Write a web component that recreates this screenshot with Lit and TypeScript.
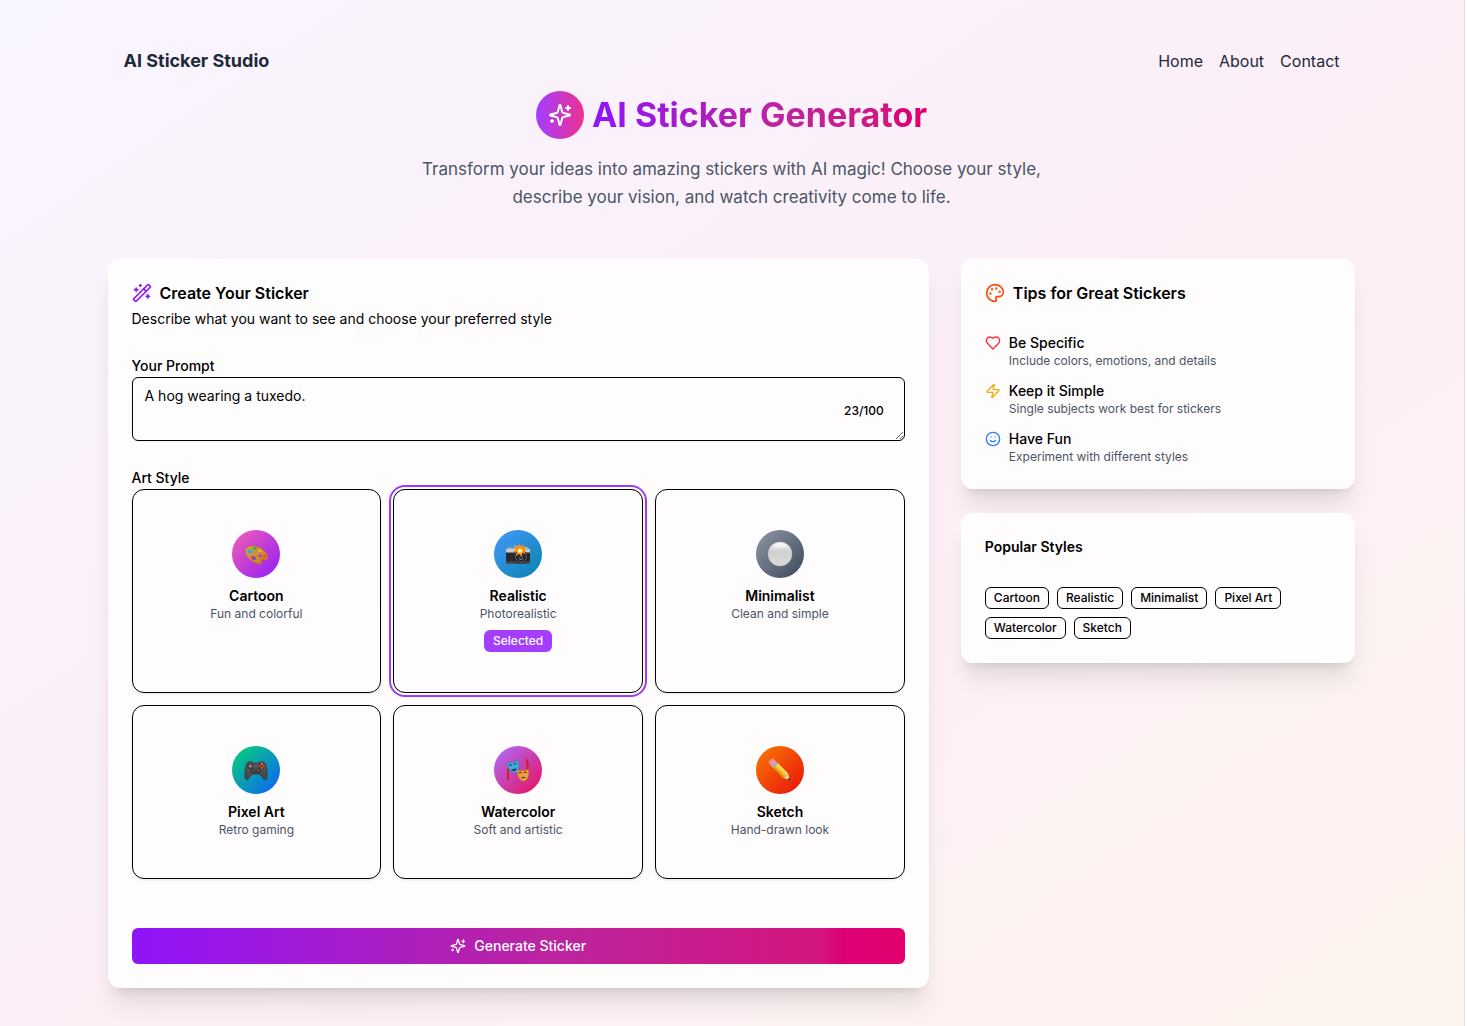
import { LitElement, html, css, svg } from "lit";
import { customElement, property, state } from "lit/decorators.js";

const ICONS: Record<string, unknown> = {
  sparkles: svg`<path d="M9.937 15.5A2 2 0 0 0 8.5 14.063l-6.135-1.582a.5.5 0 0 1 0-.962L8.5 9.936A2 2 0 0 0 9.937 8.5l1.582-6.135a.5.5 0 0 1 .963 0L14.063 8.5A2 2 0 0 0 15.5 9.937l6.135 1.581a.5.5 0 0 1 0 .964L15.5 14.063a2 2 0 0 0-1.437 1.437l-1.582 6.135a.5.5 0 0 1-.963 0z"/><path d="M20 3v4M22 5h-4M4 17v2M5 18H3"/>`,
  wand: svg`<path d="m21.64 3.64-1.28-1.28a1.21 1.21 0 0 0-1.72 0L2.36 18.64a1.21 1.21 0 0 0 0 1.72l1.28 1.28a1.2 1.2 0 0 0 1.72 0L21.64 5.36a1.2 1.2 0 0 0 0-1.72"/><path d="m14 7 3 3M5 6v4M19 14v4M10 2v2M7 8H3M21 16h-4M11 3H9"/>`,
  palette: svg`<circle cx="13.5" cy="6.5" r=".5" fill="currentColor"/><circle cx="17.5" cy="10.5" r=".5" fill="currentColor"/><circle cx="8.5" cy="7.5" r=".5" fill="currentColor"/><circle cx="6.5" cy="12.5" r=".5" fill="currentColor"/><path d="M12 2C6.5 2 2 6.5 2 12s4.5 10 10 10c.926 0 1.648-.746 1.648-1.688 0-.437-.18-.835-.437-1.125-.29-.289-.438-.652-.438-1.125a1.64 1.64 0 0 1 1.668-1.668h1.996c3.051 0 5.555-2.503 5.555-5.554C21.965 6.012 17.461 2 12 2z"/>`,
  heart: svg`<path d="M19 14c1.49-1.46 3-3.21 3-5.5A5.5 5.5 0 0 0 16.5 3c-1.76 0-3 .5-4.5 2-1.5-1.5-2.74-2-4.5-2A5.5 5.5 0 0 0 2 8.5c0 2.3 1.5 4.05 3 5.5l7 7Z"/>`,
  zap: svg`<path d="M4 14a1 1 0 0 1-.78-1.63l9.9-10.2a.5.5 0 0 1 .86.46l-1.92 6.02A1 1 0 0 0 13 10h7a1 1 0 0 1 .78 1.63l-9.9 10.2a.5.5 0 0 1-.86-.46l1.92-6.02A1 1 0 0 0 11 14z"/>`,
  smile: svg`<circle cx="12" cy="12" r="10"/><path d="M8 14s1.5 2 4 2 4-2 4-2M9 9h.01M15 9h.01"/>`,
};

/* Full-colour pictures inside the style discs, on a 26 x 26 grid. */
const PICTURES: Record<string, unknown> = {
  cartoon: svg`
    <defs><linearGradient id="wood" x1="0" y1="0" x2="1" y2="1"><stop offset="0" stop-color="#dba04c"/><stop offset="1" stop-color="#c47c22"/></linearGradient></defs>
    <path d="M2.2 9.6C2.6 5.8 7 4.2 12 5.2c6.300 1.200 12.300 5.600 12.900 11 .3 3.200-2.500 2.900-4.900 2.500-1.700-.3-2.300.9-1.800 2.200.6 1.600-.4 2.700-2.300 2.200C9.700 21.600 1.500 15.700 2.200 9.600z" fill="url(#wood)" stroke="#a8691f" stroke-width=".5"/>
    <ellipse cx="11.500" cy="7.600" rx="2.300" ry="1.500" fill="#3fb53a"/>
    <ellipse cx="6.900" cy="10.300" rx="2.500" ry="1.900" fill="#31aaf0"/>
    <ellipse cx="17" cy="9.700" rx="1.800" ry="1.100" fill="#f0c02e" transform="rotate(25 17 9.700)"/>
    <ellipse cx="10.600" cy="17" rx="2.500" ry="1.600" fill="#8a42b4" transform="rotate(30 10.600 17)"/>
    <ellipse cx="21.800" cy="15.500" rx="2.100" ry="1.400" fill="#ea4a45" transform="rotate(30 21.800 15.500)"/>
    <ellipse cx="17" cy="14.700" rx="1.700" ry="1.200" fill="#a63fc0" transform="rotate(25 17 14.700)"/>`,
  camera: svg`
    <path d="M2.500 6.500h4.200v2H2.500zM19 6h3.500v2H19z" fill="#b9bcc0"/>
    <path d="M9 4.500h8.500l1.500 3.500H8z" fill="#a4a7ab"/>
    <rect x="1" y="7.200" width="24" height="15.300" rx="1.600" fill="#29292b"/>
    <path d="M1 8.800Q1 7.200 2.600 7.200h20.800Q25 7.200 25 8.800V11.500H1z" fill="#c9ccd0"/>
    <path d="M1 20.500h24v.6Q25 22.500 23.400 22.500H2.600Q1 22.500 1 21.100z" fill="#4a4a4d"/>
    <circle cx="16" cy="15.800" r="6.600" fill="#1a1a1c"/><circle cx="16" cy="15.800" r="5.400" fill="none" stroke="#737579" stroke-width=".9"/>
    <circle cx="16" cy="15.800" r="3.400" fill="#30343b"/><path d="M13.800 17.700a3 3 0 0 0 4.300 0" stroke="#7b8490" stroke-width=".9" fill="none"/>
    <path d="M14.500 2.300 15.700 6l3.900-2.700-1.400 4.300 4.200.6-3.700 1.700 2.600 3.400-4.100-1.300-.6 4.200-2.400-3.500-3.400 2.500.9-4.100-4.400-.4 3.900-2-2.700-3.100 4 .7z" fill="#f28a10"/>
    <path d="m14.700 5.400.9 2.500 2.100-.7-.7 2 2 1-2.300.6.4 2.300-2-1.300-1.800 1.500.2-2.200-2.200-.6 2-1.100-.9-2 1.900.5z" fill="#ffd23c"/><circle cx="14.800" cy="9.700" r="1.500" fill="#fff7cf"/>`,
  circle: svg`
    <defs><linearGradient id="pearl" x1="0" y1="0" x2="0" y2="1"><stop offset="0" stop-color="#fafafa"/><stop offset=".28" stop-color="#dcdcdc"/><stop offset=".4" stop-color="#d0d0d1"/><stop offset="1" stop-color="#dadada"/></linearGradient></defs>
    <circle cx="13" cy="13" r="12" fill="url(#pearl)" stroke="#bfc1c4" stroke-width=".5"/><ellipse cx="13" cy="4.500" rx="6.500" ry="2.600" fill="#f9f9f9" opacity=".6"/>`,
  gamepad: svg`
    <defs><linearGradient id="pad" x1="0" y1="0" x2="0" y2="1"><stop offset="0" stop-color="#5c5b59"/><stop offset="1" stop-color="#454443"/></linearGradient></defs>
    <g transform="translate(1.300 1.500) scale(.9)">
      <path d="M5 3.700h4l1.200 1.400h5.600L17 3.700h4c2.200.5 3 2.600 3.500 5.400.7 4 1.300 9 .5 12.600-.5 2-2.500 2.300-3.800.7-1.500-1.900-2.500-4.400-4.200-5H9c-1.700.6-2.700 3.100-4.200 5C3.500 24 1.500 23.700 1 21.700.2 18.100.8 13.100 1.500 9.100 2 6.300 2.800 4.200 5 3.700z" fill="url(#pad)" stroke="#2a2928" stroke-width=".6"/>
      <circle cx="6.800" cy="8.400" r="3.500" fill="#3b3a3a"/><path d="M6.800 6v4.800M4.400 8.400h4.800" stroke="#8a8a88" stroke-width="1.500"/>
      <circle cx="19.400" cy="8.200" r="3.600" fill="#3f3431"/>
      <circle cx="19.400" cy="6" r="1.300" fill="#f2713f"/><circle cx="17.300" cy="8.300" r="1.200" fill="#c75130"/><circle cx="21.500" cy="8.300" r="1.300" fill="#f04a2a"/><circle cx="19.400" cy="10.500" r="1.200" fill="#e0522c"/>
      <circle cx="10" cy="13.700" r="2.600" fill="#2d2c2c"/><circle cx="10" cy="13.500" r="1.600" fill="#5b5a59"/><circle cx="16" cy="13.700" r="2.600" fill="#2d2c2c"/><circle cx="16" cy="13.500" r="1.600" fill="#5b5a59"/>
    </g>`,
  masks: svg`
    <path d="M3.400 11C2.300 14 3.600 17 2.900 22M21.500 3c2.300 3.500.3 6.500 1.200 10" stroke="#c41f2b" stroke-width="1.900" fill="none" stroke-linecap="round"/>
    <path d="M1.600 5.300c3.500.6 7.600-.1 11.300-2.200 1.700 4.800 2.200 10.600-2.400 12.700C5.600 16.900 2.300 10.500 1.600 5.300z" fill="#46a7dc" stroke="#2574a8" stroke-width=".5"/>
    <path d="M3.800 8.400q1.600-1 2.800.1M8.700 7.400q1.500-1.500 2.800-.6" stroke="#173f63" stroke-width="1.100" fill="none"/><path d="M5.500 12.200q3.600.9 5.800-1.800-.1 3.600-2.600 3.700-2 .1-3.200-1.900z" fill="#17364f"/>
    <path d="M12.200 13c3.500 1 7.500.8 11.200-.7 1.500 5.500-.1 10.400-4.500 11.900-4.500.2-7-5.700-6.700-11.200z" fill="#e9a13c" stroke="#a9621f" stroke-width=".5"/>
    <path d="M14 16.200q1.400-1.500 2.600-.1M19 15.800q1.400-1.400 2.700-.2" stroke="#5b2d10" stroke-width="1.100" fill="none"/><path d="M15.900 21.600q2.200-3.500 4.800-.5-2.200-.4-4.800.5z" fill="#5b2d10"/>`,
  pencil: svg`
    <g transform="rotate(45 13 13)">
      <rect x="-.8" y="9.700" width="4.800" height="6.600" rx="1.700" fill="#ef8f9a"/>
      <rect x="3.600" y="9.700" width="3.500" height="6.600" fill="#b8bec5"/><path d="M4.800 9.700v6.600M6.200 9.700v6.600" stroke="#7d858d" stroke-width=".5"/>
      <rect x="7.100" y="9.700" width="14" height="6.600" fill="#f8c22c"/><path d="M7.100 9.700h14v2h-14z" fill="#fbe16c"/><path d="M7.100 14.300h14v2h-14z" fill="#d99414"/>
      <path d="m21.100 9.700 6.300 3.300-6.300 3.300z" fill="#f0cb94"/><path d="m25 11.700 2.700 1.300-2.700 1.300z" fill="#2d2a2a"/>
    </g>`,
};

const icon = (name: string, cls: string) => html`
  <svg class="icon ${cls}" viewBox="0 0 24 24" fill="none" stroke="currentColor" stroke-width="2" stroke-linecap="round" stroke-linejoin="round" aria-hidden="true">${ICONS[name]}</svg>
`;

const shared = css`
  *, *::before, *::after { box-sizing: border-box; }
  h1, h2, h3, p, ul { margin: 0; padding: 0; }
  ul { list-style: none; }
  button, textarea { font: inherit; color: inherit; margin: 0; }
  .icon { display: block; flex: none; width: 16px; height: 16px; }
  .icon.md { width: 20px; height: 20px; }
  .icon.lg { width: 24px; height: 24px; }
`;

interface ArtStyle { id: string; name: string; note: string; picture: string; }

const STYLES: ArtStyle[] = [
  { id: "cartoon", name: "Cartoon", note: "Fun and colorful", picture: "cartoon" },
  { id: "realistic", name: "Realistic", note: "Photorealistic", picture: "camera" },
  { id: "minimalist", name: "Minimalist", note: "Clean and simple", picture: "circle" },
  { id: "pixel", name: "Pixel Art", note: "Retro gaming", picture: "gamepad" },
  { id: "watercolor", name: "Watercolor", note: "Soft and artistic", picture: "masks" },
  { id: "sketch", name: "Sketch", note: "Hand-drawn look", picture: "pencil" },
];

const TIPS = [
  { icon: "heart", name: "Be Specific", note: "Include colors, emotions, and details" },
  { icon: "zap", name: "Keep it Simple", note: "Single subjects work best for stickers" },
  { icon: "smile", name: "Have Fun", note: "Experiment with different styles" },
];

@customElement("style-option")
class StyleOption extends LitElement {
  @property({ attribute: false }) option!: ArtStyle;
  @property({ type: Boolean }) selected = false;

  static styles = [shared, css`
    :host { display: grid; }
    .option {
      display: flex; flex-direction: column; align-items: center;
      padding: 40px 16px; border: 1px solid #000; border-radius: 12px;
      background: none; text-align: center; cursor: pointer;
      box-shadow: 0 1px 3px rgb(0 0 0 / 0.1);
    }
    .option.selected { box-shadow: 0 0 0 2px #fff, 0 0 0 4px #9d3cf7; }
    .disc { display: grid; place-items: center; width: 48px; height: 48px; border-radius: 50%; margin-bottom: 8px; }
    .picture { display: block; width: 26px; height: 26px; }
    .cartoon { background: linear-gradient(135deg, #f560b2, #8f1cfb); }
    .realistic { background: linear-gradient(135deg, #4598fb, #0784ae); }
    .minimalist { background: linear-gradient(135deg, #8e97a6, #3c4859); }
    .pixel { background: linear-gradient(135deg, #05d672, #0d5ffc); }
    .watercolor { background: linear-gradient(135deg, #a970ff, #ec0d5c); }
    .sketch { background: linear-gradient(135deg, #fb7a04, #e7100b); }
    .name { font-size: 14px; line-height: 20px; font-weight: 600; }
    .note { font-size: 12px; line-height: 16px; color: #4a5565; }
    .badge { margin-top: 8px; padding: 3px 9px; border-radius: 6px; background: #a33eff; color: #fff; font-size: 12px; line-height: 16px; font-weight: 500; }
  `];

  render() {
    const o = this.option;
    return html`
      <button type="button" class="option ${this.selected ? "selected" : ""}" aria-pressed=${this.selected}>
        <span class="disc ${o.id}"><svg class="picture" viewBox="0 0 26 26" aria-hidden="true">${PICTURES[o.picture]}</svg></span>
        <span class="name">${o.name}</span>
        <span class="note">${o.note}</span>
        ${this.selected ? html`<span class="badge">Selected</span>` : null}
      </button>
    `;
  }
}

@customElement("app-root")
class AppRoot extends LitElement {
  @state() private selected = "realistic";

  static styles = [shared, css`
    :host {
      --brand-gradient: linear-gradient(to right, #8f14fb, #bd249e 55%, #d3167f 89%, #dc0078 92%, #e2006c);
      display: block; padding-right: 2px; background: #fff; color: #000;
      font-family: Inter, "Liberation Sans", sans-serif; font-size: 16px; line-height: 24px;
    }
    .page {
      min-height: 100vh; padding-right: 1px; border-right: 1px solid #dcdfe4;
      background: linear-gradient(to bottom right, #f9f5ff, #fceff7 50%, #fef4ee);
    }
    .container { max-width: 1280px; margin: 0 auto; padding: 32px 16px; }
    .topbar { display: flex; justify-content: space-between; align-items: center; margin-bottom: 2px; padding: 16px; color: #1e2939; }
    .brand { font-size: 18px; line-height: 25px; font-weight: 700; }
    .nav { display: flex; gap: 16px; }
    .nav a { color: inherit; text-decoration: none; }
    .hero { display: flex; flex-direction: column; align-items: center; gap: 16px; margin-bottom: 48px; text-align: center; }
    .hero-title { display: flex; align-items: center; gap: 8px; }
    .hero-disc { display: grid; place-items: center; width: 48px; height: 48px; border-radius: 50%; color: #fff; background: linear-gradient(to right, #a13eff, #ee3192); }
    h1 { font-size: 34px; line-height: 40px; font-weight: 700; color: transparent; background: var(--brand-gradient); -webkit-background-clip: text; background-clip: text; }
    .lead { max-width: 640px; font-size: 17px; line-height: 28px; color: #4a5565; }
    .columns { display: grid; grid-template-columns: repeat(3, minmax(0, 1fr)); gap: 32px; align-items: start; }
    .card { background: rgb(255 255 255 / 0.8); border-radius: 12px; padding: 24px; box-shadow: 0 20px 25px -5px rgb(0 0 0 / 0.1), 0 8px 10px -6px rgb(0 0 0 / 0.1); }
    .create { grid-column: span 2; display: flex; flex-direction: column; gap: 24px; }
    .side { display: flex; flex-direction: column; gap: 24px; }
    .side .card { display: flex; flex-direction: column; gap: 30px; }
    .card-title { display: flex; align-items: center; gap: 8px; font-size: 16px; line-height: 20px; font-weight: 600; }
    .card-title.small { font-size: 14px; }
    .wand { color: #9015fa; }
    .palette { color: #f54a0c; }
    .card-desc { margin-top: 6px; font-size: 14px; line-height: 20px; }
    .label { font-size: 14px; line-height: 20px; font-weight: 500; }
    .prompt { position: relative; }
    textarea { display: block; width: 100%; height: 64px; padding: 8px 12px; border: 1px solid #000; border-radius: 6px; background: none; font-size: 14px; line-height: 20px; resize: vertical; box-shadow: 0 1px 2px rgb(0 0 0 / 0.05); }
    .counter { position: absolute; right: 21px; top: 26px; font-size: 12px; line-height: 16px; font-weight: 500; }
    .options { display: grid; grid-template-columns: repeat(3, minmax(0, 1fr)); gap: 12px; }
    .generate {
      display: flex; align-items: center; justify-content: center; gap: 8px; margin-top: 25px; height: 36px;
      border: 0; border-radius: 6px; color: #fff; font-size: 14px; line-height: 20px; font-weight: 500; cursor: pointer;
      background: var(--brand-gradient);
    }
    .tips { display: flex; flex-direction: column; gap: 12px; }
    .tip { display: flex; gap: 8px; }
    .tip .icon { margin-top: 2px; }
    .heart { color: #fb2c36; }
    .zap { color: #edad0a; }
    .smile { color: #2b7fff; }
    .tip-name { font-size: 14px; line-height: 20px; font-weight: 500; }
    .tip-note { font-size: 12px; line-height: 16px; color: #4a5565; }
    .tags { display: flex; flex-wrap: wrap; gap: 8px; }
    .tag { padding: 2px 8px; border: 1px solid #000; border-radius: 6px; font-size: 12px; line-height: 16px; font-weight: 500; }
  `];

  render() {
    return html`
      <div class="page">
        <div class="container">
          <header class="topbar">
            <div class="brand">AI Sticker Studio</div>
            <nav class="nav"><a href="#home">Home</a><a href="#about">About</a><a href="#contact">Contact</a></nav>
          </header>
          <section class="hero">
            <div class="hero-title">
              <div class="hero-disc">${icon("sparkles", "lg")}</div>
              <h1>AI Sticker Generator</h1>
            </div>
            <p class="lead">Transform your ideas into amazing stickers with AI magic! Choose your style, describe your vision, and watch creativity come to life.</p>
          </section>
          <main class="columns">
            <section class="card create">
              <div>
                <h2 class="card-title">${icon("wand", "md wand")}Create Your Sticker</h2>
                <p class="card-desc">Describe what you want to see and choose your preferred style</p>
              </div>
              <div>
                <label class="label" for="prompt">Your Prompt</label>
                <div class="prompt">
                  <textarea id="prompt" maxlength="100" .value=${"A hog wearing a tuxedo."}></textarea>
                  <span class="counter">23/100</span>
                </div>
              </div>
              <div>
                <span class="label" id="art-style">Art Style</span>
                <div class="options" role="group" aria-labelledby="art-style">
                  ${STYLES.map((s) => html`<style-option .option=${s} .selected=${s.id === this.selected} @click=${() => (this.selected = s.id)}></style-option>`)}
                </div>
              </div>
              <button type="button" class="generate">${icon("sparkles", "")}Generate Sticker</button>
            </section>
            <aside class="side">
              <section class="card">
                <h2 class="card-title">${icon("palette", "md palette")}Tips for Great Stickers</h2>
                <ul class="tips">
                  ${TIPS.map((t) => html`<li class="tip">${icon(t.icon, t.icon)}<div><p class="tip-name">${t.name}</p><p class="tip-note">${t.note}</p></div></li>`)}
                </ul>
              </section>
              <section class="card">
                <h2 class="card-title small">Popular Styles</h2>
                <ul class="tags">${STYLES.map((s) => html`<li class="tag">${s.name}</li>`)}</ul>
              </section>
            </aside>
          </main>
        </div>
      </div>
    `;
  }
}
